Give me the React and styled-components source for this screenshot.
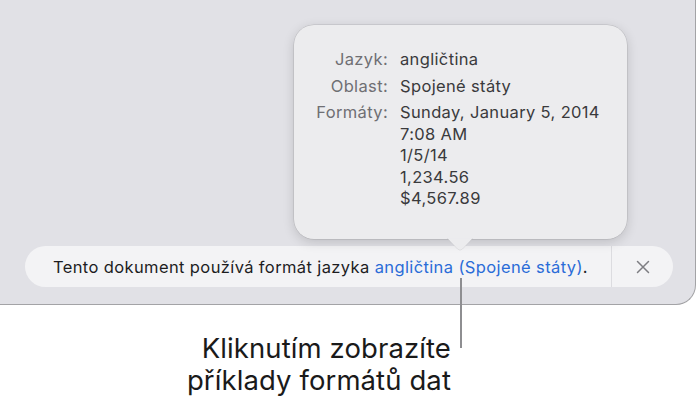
import React from "react";
import styled, { createGlobalStyle } from "styled-components";

const Global = createGlobalStyle`
  html, body { margin: 0; padding: 0; background: #ffffff; }
  body { font-family: Inter, "Noto Sans", "Liberation Sans", sans-serif; -webkit-font-smoothing: antialiased; }
`;

const Page = styled.div`
  position: relative;
  width: 700px;
  height: 404px;
  overflow: hidden;
  background: #ffffff;
`;

const Window = styled.div`
  box-sizing: border-box;
  width: 696px;
  height: 305px;
  display: flex;
  flex-direction: column;
  align-items: flex-start;
  padding: 25px 0 0 25px;
  background: #e1e1e6;
  border-right: 1px solid #a3a3a6;
  border-bottom: 1px solid #a3a3a6;
  border-bottom-right-radius: 20px;
`;

const Popover = styled.div`
  position: relative;
  z-index: 2;
  box-sizing: border-box;
  margin-left: 269px;
  width: 333px;
  height: 214px;
  padding: 24px 0 0 22px;
  background: #ececee;
  border-radius: 20px;
  box-shadow: 0 0 0 0.5px rgba(0, 0, 0, 0.14), 0 3px 12px rgba(0, 0, 0, 0.16);
`;

const Arrow = styled.svg`
  position: absolute;
  left: 153px;
  bottom: -13px;
  width: 26px;
  height: 14px;
  overflow: visible;
`;

const InfoGrid = styled.div`
  display: grid;
  grid-template-columns: 72px auto;
  column-gap: 12px;
  row-gap: 5px;
  font-size: 16.5px;
  letter-spacing: 0.35px;
  line-height: 21.5px;
`;

const Label = styled.div`
  text-align: right;
  color: #6f6f73;
  white-space: nowrap;
`;

const Value = styled.div`
  color: #3a3a3c;
  white-space: nowrap;
`;

const Bar = styled.div`
  box-sizing: border-box;
  margin-top: 7px;
  width: 648px;
  height: 41px;
  display: flex;
  align-items: stretch;
  background: #f3f3f5;
  border-radius: 21px;
`;

const Message = styled.div`
  flex: 1;
  display: flex;
  align-items: center;
  padding-left: 28px;
  font-size: 16.5px;
  letter-spacing: 0.38px;
  color: #1d1d1f;
  white-space: nowrap;
`;

const Link = styled.span`
  color: #2a6cd8;
`;

const Close = styled.div`
  width: 61px;
  display: flex;
  align-items: center;
  justify-content: center;
  border-left: 1px solid #dcdce0;
  color: #7d7d82;
`;

const Leader = styled.div`
  position: absolute;
  left: 460px;
  top: 278px;
  width: 2px;
  height: 70px;
  background: #8e8e91;
`;

const Caption = styled.div`
  margin-top: 27px;
  width: 451px;
  text-align: right;
  font-size: 27.5px;
  letter-spacing: 0.1px;
  line-height: 32px;
  color: #1a1a1a;
`;

const CaptionLine = styled.span`
  display: block;
`;

export default function App() {
  return (
    <Page>
      <Global />
      <Window>
        <Popover>
          <InfoGrid>
            <Label>Jazyk:</Label>
            <Value>angličtina</Value>
            <Label>Oblast:</Label>
            <Value>Spojené státy</Value>
            <Label>Formáty:</Label>
            <Value>
              Sunday, January 5, 2014
              <br />7:08 AM
              <br />1/5/14
              <br />1,234.56
              <br />$4,567.89
            </Value>
          </InfoGrid>
          <Arrow viewBox="0 0 26 14">
            <path d="M0 0 L10.5 11 Q13 13.5 15.5 11 L26 0 Z" fill="#ececee" />
            <path d="M0 0 L10.5 11 Q13 13.5 15.5 11 L26 0" fill="none" stroke="rgba(0,0,0,0.10)" strokeWidth="0.6" />
            <rect x="-1" y="-2" width="28" height="2.2" fill="#ececee" />
          </Arrow>
        </Popover>
        <Bar>
          <Message>
            Tento dokument používá formát jazyka&nbsp;<Link>angličtina (Spojené státy)</Link>.
          </Message>
          <Close>
            <svg width="14" height="14" viewBox="0 0 14 14">
              <path d="M1.5 1.5 L12.5 12.5 M12.5 1.5 L1.5 12.5" stroke="currentColor" strokeWidth="1.5" strokeLinecap="round" />
            </svg>
          </Close>
        </Bar>
      </Window>
      <Leader />
      <Caption>
        <CaptionLine>Kliknutím zobrazíte</CaptionLine>
        <CaptionLine>příklady formátů dat</CaptionLine>
      </Caption>
    </Page>
  );
}
